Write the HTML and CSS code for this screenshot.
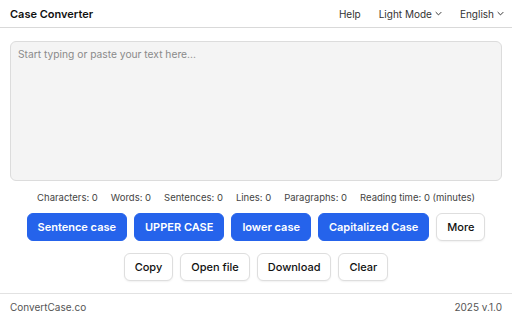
FILE: index.html
```html
<!DOCTYPE html>
<html>
<head>
<meta charset="utf-8">
<link rel="stylesheet" href="styles.css">
</head>
<body>
<header class="header">
  <div class="title">Case Converter</div>
  <nav class="nav">
    <span class="nav-item">Help</span>
    <span class="nav-item">Light Mode <svg class="chev" viewBox="0 0 10 6" width="7" height="5"><path d="M1 1l4 4 4-4" fill="none" stroke="#333" stroke-width="1.4"/></svg></span>
    <span class="nav-item">English <svg class="chev" viewBox="0 0 10 6" width="7" height="5"><path d="M1 1l4 4 4-4" fill="none" stroke="#333" stroke-width="1.4"/></svg></span>
  </nav>
</header>
<main class="main">
  <textarea class="editor" placeholder="Start typing or paste your text here..."></textarea>
  <div class="stats">
    <span>Characters: 0</span>
    <span>Words: 0</span>
    <span>Sentences: 0</span>
    <span>Lines: 0</span>
    <span>Paragraphs: 0</span>
    <span>Reading time: 0 (minutes)</span>
  </div>
  <div class="row row-primary">
    <button class="btn btn-blue">Sentence case</button>
    <button class="btn btn-blue">UPPER CASE</button>
    <button class="btn btn-blue">lower case</button>
    <button class="btn btn-blue">Capitalized Case</button>
    <button class="btn btn-white">More</button>
  </div>
  <div class="row row-secondary">
    <button class="btn btn-white">Copy</button>
    <button class="btn btn-white">Open file</button>
    <button class="btn btn-white">Download</button>
    <button class="btn btn-white">Clear</button>
  </div>
</main>
<footer class="footer">
  <span>ConvertCase.co</span>
  <span>2025 v.1.0</span>
</footer>
</body>
</html>
```
FILE: styles.css
```css
* { box-sizing: border-box; }
html, body { margin: 0; padding: 0; }
body {
  width: 512px;
  height: 320px;
  font-family: Inter, "Noto Sans", sans-serif;
  color: #222;
  background: #fff;
  overflow: hidden;
  position: relative;
}
.header {
  height: 28px;
  border-bottom: 1.5px solid #d9d9d9;
  display: flex;
  align-items: center;
  justify-content: space-between;
  padding: 0 8px 0 10px;
}
.title {
  font-size: 11px;
  font-weight: 600;
  color: #111;
}
.nav {
  display: flex;
  gap: 18px;
  font-size: 10px;
  color: #333;
}
.nav-item { display: flex; align-items: center; gap: 3px; }
.chev { display: block; }
.main {
  padding: 13px 10px 0;
}
.editor {
  display: block;
  width: 100%;
  height: 140px;
  background: #f4f4f4;
  border: 1px solid #dcdcdc;
  border-radius: 6px;
  resize: none;
  padding: 6px 7px;
  font-family: Inter, "Noto Sans", sans-serif;
  font-size: 10.25px;
  outline: none;
}
.editor::placeholder { color: #8a8a8a; }
.stats {
  display: flex;
  justify-content: center;
  gap: 13px;
  font-size: 9.5px;
  color: #444;
  margin-top: 11px;
  line-height: 12px;
}
.row {
  display: flex;
  justify-content: center;
  gap: 7px;
}
.row-primary { margin-top: 9px; }
.row-secondary { margin-top: 12px; }
.btn {
  height: 28px;
  padding: 0 10px;
  border-radius: 6px;
  font-family: Inter, "Noto Sans", sans-serif;
  font-size: 11px;
  cursor: pointer;
}
.btn-blue {
  background: #2563eb;
  color: #fff;
  border: 1px solid #2563eb;
  font-weight: 600;
}
.btn-white {
  background: #fff;
  color: #111;
  border: 1px solid #dedede;
  font-weight: 500;
  box-shadow: 0 1px 2px rgba(0,0,0,0.06);
}
.footer {
  position: absolute;
  left: 0;
  right: 0;
  top: 293px;
  height: 27px;
  border-top: 1.5px solid #e2e2e2;
  display: flex;
  align-items: center;
  justify-content: space-between;
  padding: 0 10px;
  font-size: 10px;
  color: #555;
}
```
